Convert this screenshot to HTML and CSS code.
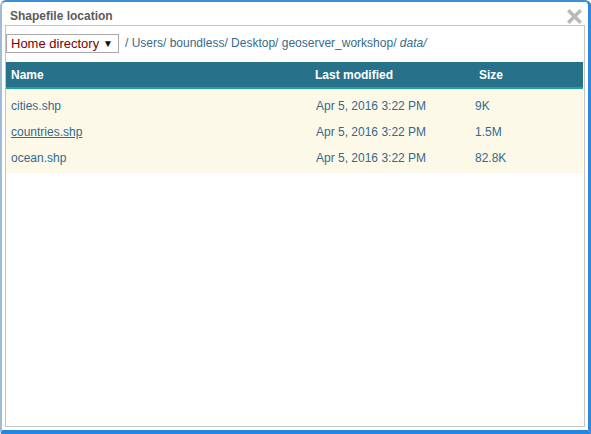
FILE: index.html
```html
<!DOCTYPE html>
<html>
<head>
<meta charset="utf-8">
<link rel="stylesheet" href="styles.css">
</head>
<body>
<div class="window">
  <div class="titlebar">
    <span class="title">Shapefile location</span>
    <span class="close" aria-label="close">
      <svg width="15" height="15" viewBox="0 0 15 15"><path d="M2.5 2.5 L12.5 12.5 M12.5 2.5 L2.5 12.5" stroke="#b9b9b9" stroke-width="3.6" stroke-linecap="square"/></svg>
    </span>
  </div>
  <div class="panel">
    <div class="pathbar">
      <div class="select"><span class="sel-text">Home directory</span><span class="arrow">▼</span></div>
      <div class="path">/ Users/ boundless/ Desktop/ geoserver_workshop/ <em>data/</em></div>
    </div>
    <div class="table">
      <div class="thead">
        <div class="th c-name">Name</div>
        <div class="th c-date">Last modified</div>
        <div class="th c-size">Size</div>
      </div>
      <div class="tbody">
        <div class="row"><div class="td c-name">cities.shp</div><div class="td c-date">Apr 5, 2016 3:22 PM</div><div class="td c-size">9K</div></div>
        <div class="row"><div class="td c-name"><span class="link">countries.shp</span></div><div class="td c-date">Apr 5, 2016 3:22 PM</div><div class="td c-size">1.5M</div></div>
        <div class="row"><div class="td c-name">ocean.shp</div><div class="td c-date">Apr 5, 2016 3:22 PM</div><div class="td c-size">82.8K</div></div>
      </div>
    </div>
  </div>
</div>
</body>
</html>
```
FILE: styles.css
```css
html, body {
  margin: 0;
  padding: 0;
  background: #ffffff;
}
body {
  font-family: "Liberation Sans", Arial, sans-serif;
  font-size: 12px;
}
.window {
  box-sizing: border-box;
  width: 591px;
  height: 434px;
  background: #ffffff;
  border-top: 2px solid #3d8fdd;
  border-left: 2px solid #9fbbd8;
  border-right: 3px solid #2f88dc;
  border-bottom: 4px solid #2586e2;
  border-radius: 6px 6px 3px 3px;
  display: flex;
  flex-direction: column;
  padding: 0 3px 3px 3px;
  box-shadow: 1px 1px 0 #8a8a8a;
}
.titlebar {
  height: 23px;
  display: flex;
  align-items: center;
  justify-content: space-between;
  padding: 0 3px 0 5px;
}
.title {
  font-weight: bold;
  color: #5b5b5b;
  font-size: 12px;
  margin-top: 5px;
}
.close {
  display: flex;
  margin-top: 5px;
}
.panel {
  flex: 1;
  border: 1px solid #c4c4c4;
  background: #ffffff;
}
.pathbar {
  display: flex;
  align-items: center;
  height: 22px;
  margin-top: 6px;
  gap: 6px;
}
.select {
  box-sizing: border-box;
  width: 113px;
  height: 19px;
  border: 1px solid #a8a8a8;
  background: #fff;
  display: flex;
  align-items: center;
  justify-content: space-between;
  padding: 0 5px 0 4px;
  font-size: 13px;
}
.sel-text {
  color: #7a0000;
}
.arrow {
  color: #111;
  font-size: 10px;
}
.path {
  color: #3a6a88;
  font-size: 12px;
}
.path em {
  font-style: italic;
}
.table {
  margin-top: 8px;
  width: 577px;
}
.thead, .row {
  display: grid;
  grid-template-columns: 304px 160px 1fr;
}
.thead {
  background: #27718b;
  height: 25px;
  border-bottom: 2px solid #1fa68a;
  align-items: center;
  padding-top: 1px;
  box-sizing: border-box;
  height: 27px;
}
.th {
  color: #ffffff;
  font-weight: bold;
  padding-left: 5px;
}
.th.c-size {
  padding-left: 9px;
}
.tbody {
  background: #fdf9e9;
  padding: 3px 0 2px;
}
.row {
  height: 26px;
  align-items: center;
}
.row:first-child {
  height: 27px;
}
.td {
  color: #33698c;
  padding-left: 5px;
}
.td.c-date {
  padding-left: 6px;
}
.link {
  text-decoration: underline;
}
```
